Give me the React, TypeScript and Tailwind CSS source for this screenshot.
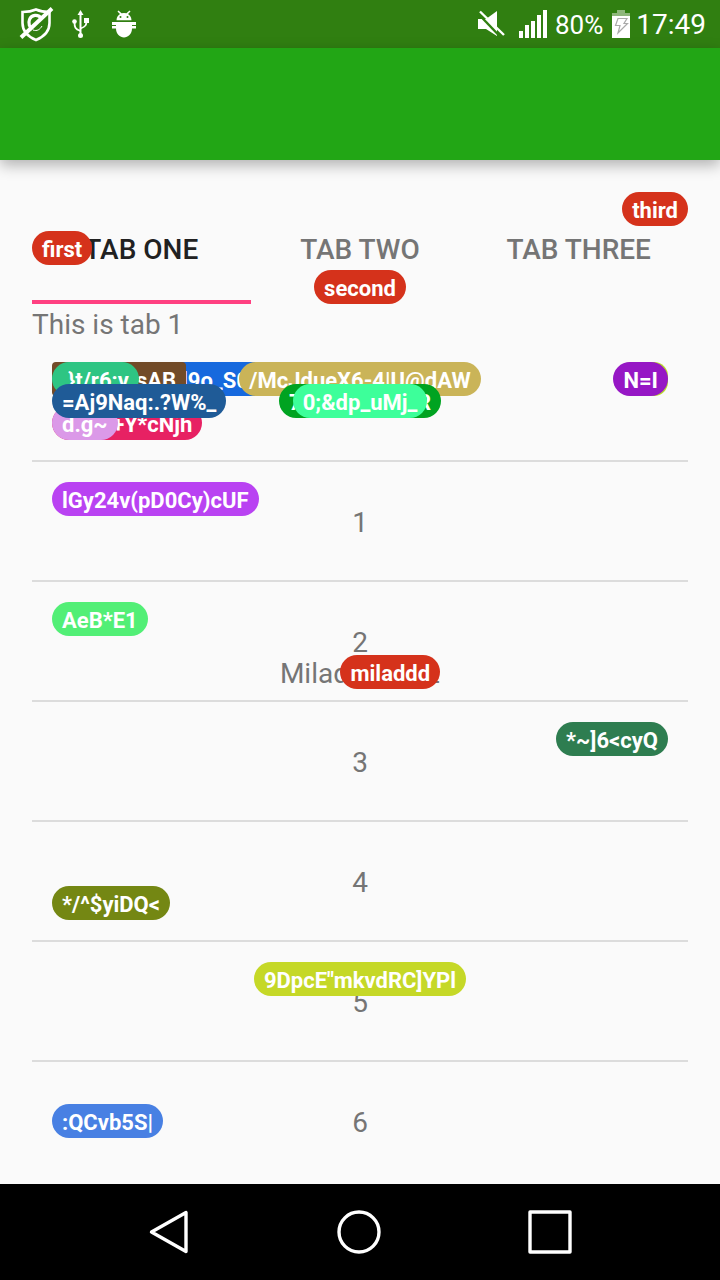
import React from "react";

type BadgeProps = { text: string; place: string; color: string };

function Badge({ text, place, color }: BadgeProps) {
  return (
    <span
      className={`absolute h-[34px] px-[10px] pt-[3px] text-[22px] leading-[32px] font-bold whitespace-pre text-white ${place} ${color}`}
    >
      {text}
    </span>
  );
}

const tabs = [
  {
    label: "TAB ONE",
    active: true,
    badge: { text: "first", place: "left-0 inset-y-0 my-auto rounded-full", color: "bg-[#d5321b]" },
  },
  {
    label: "TAB TWO",
    active: false,
    badge: { text: "second", place: "bottom-0 inset-x-0 mx-auto w-fit rounded-full", color: "bg-[#d5321b]" },
  },
  {
    label: "TAB THREE",
    active: false,
    badge: { text: "third", place: "top-0 right-0 rounded-full", color: "bg-[#d5321b]" },
  },
];

const rows: BadgeProps[][] = [
  [
    { text: "(kq7RwrT2xl9o_S0d", place: "left-5 top-5 rounded-md", color: "bg-[#1669de]" },
    { text: "Wm3xasAB", place: "left-5 top-5 rounded-sm", color: "bg-[#724b28]" },
    { text: "}t/r6:v", place: "left-5 top-5 pl-4 rounded-full", color: "bg-[#2ec583]" },
    { text: "/McJdueX6-4|U@dAW", place: "top-5 inset-x-0 mx-auto w-fit rounded-full", color: "bg-[#cab458]" },
    { text: "x=l", place: "top-5 right-5 rounded-[14px]", color: "bg-[#b9dd2b]" },
    { text: "N=I", place: "top-5 right-5 rounded-full", color: "bg-[#9617c5]" },
    { text: "eK2a+Y*cNjh", place: "left-5 bottom-5 rounded-full", color: "bg-[#e72163]" },
    { text: "d.g~", place: "left-5 bottom-5 rounded-full", color: "bg-[#db99e8]" },
    { text: "=Aj9Naq:.?W%_", place: "left-5 inset-y-0 my-auto rounded-full", color: "bg-[#1f5b97]" },
    { text: "7hV:c[w4m;xR", place: "inset-0 m-auto w-fit rounded-full", color: "bg-[#00a321]" },
    { text: "0;&dp_uMj_", place: "inset-0 m-auto w-fit rounded-full", color: "bg-[#3dff9a]" },
  ],
  [{ text: "lGy24v(pD0Cy)cUF", place: "left-5 top-5 rounded-full", color: "bg-[#b942f2]" }],
  [{ text: "AeB*E1", place: "left-5 top-5 rounded-full", color: "bg-[#52ef76]" }],
  [{ text: "*~]6<cyQ", place: "right-5 top-5 rounded-full", color: "bg-[#2e7d50]" }],
  [{ text: "*/^$yiDQ<", place: "left-5 bottom-5 rounded-full", color: "bg-[#748713]" }],
  [{ text: '9DpcE"mkvdRC]YPl', place: "top-5 inset-x-0 mx-auto w-fit rounded-full", color: "bg-[#c5d827]" }],
  [{ text: ":QCvb5S|", place: "left-5 inset-y-0 my-auto rounded-full", color: "bg-[#4880e3]" }],
];

function StatusBar() {
  return (
    <header className="flex h-12 items-center justify-between bg-[#307f11] pr-[14px] pl-[18px] text-white">
      <div className="flex items-center">
        <svg width="36" height="36" viewBox="0 0 36 36" fill="none" stroke="currentColor">
          <path d="M18 3.500C13.500 5.500 9 6 4.500 6V17c0 8 5 13.500 13.500 17C26.500 30.500 31.500 25 31.500 17V6C27 6 22.500 5.500 18 3.500Z" strokeWidth="2.600" />
          <path d="M23 12c-3-4-9.500-3.500-11.500 1.500-1.500 4 0 8 3 9.500" strokeWidth="3.200" />
          <path d="M15 24c4 1.500 7-.500 9-4" strokeWidth="1" />
          <path d="M3 31.500L34 2.500" strokeWidth="4" />
        </svg>
        <svg className="ml-[18px]" width="17" height="30" viewBox="0 0 17 30" fill="none" stroke="currentColor">
          <path d="M8.500 27V5" strokeWidth="2" />
          <path d="M8.500 22C3 20 2.500 18.500 2.500 13M8.500 19.500C14 17.500 14.500 16 14.500 11" strokeWidth="1.800" />
          <path d="M8.500 1l3 5h-6z" fill="currentColor" stroke="none" />
          <circle cx="8.500" cy="26.500" r="2.500" fill="currentColor" stroke="none" />
          <circle cx="2.500" cy="12.500" r="2.300" fill="currentColor" stroke="none" />
          <path d="M12 9h5v5h-5z" fill="currentColor" stroke="none" />
        </svg>
        <svg className="ml-[23px]" width="24" height="28" viewBox="0 0 24 28" fill="currentColor">
          <path d="M4.500 10.300C4.500 7 6.500 5 8 4L5.500 1.500 6.500.500 9.500 3.300a8 8 0 0 1 5 0L17.500.500l1 1L16 4c1.500 1 3.500 3 3.500 6.300Z" />
          <path d="M0 12h24v3h-4v1h4v2.500h-4C20 24 16 27.500 12 27.500S4 24 4 18.500H0V16h4v-1H0z" />
          <circle cx="8.500" cy="7" r="1" fill="#307f11" />
          <circle cx="15.500" cy="7" r="1" fill="#307f11" />
        </svg>
      </div>
      <div className="flex items-center">
        <svg width="28" height="28" viewBox="0 0 28 28" fill="currentColor">
          <path d="M1 9h8l11-8v25L9 19H1Z" />
          <path d="M1 3.500L24 27.500" stroke="#307f11" strokeWidth="2.400" />
          <path d="M3 1.500L27 25" stroke="currentColor" strokeWidth="2.400" />
        </svg>
        <svg className="ml-[14px]" width="28" height="28" viewBox="0 0 28 28" fill="currentColor">
          <path d="M0 21h4v7H0zM6 15h4v13H6zM12 11h4v17h-4zM18 5h4v23h-4zM24 0h4v28h-4z" />
        </svg>
        <span className="ml-2 pt-[2px] text-[26px] leading-8">80%</span>
        <svg className="ml-[9px]" width="18" height="28" viewBox="0 0 18 28">
          <path d="M5 0h8v3h5v25H0V3h5z" fill="#8fb77c" />
          <path d="M0 6h18v22H0z" fill="#fff" />
          <path d="M6 8.500h9l-3 5h3.500L6 23l2-7.500H3.500z" fill="none" stroke="#aaa" strokeWidth="1.200" />
        </svg>
        <span className="ml-[6px] pt-[2px] text-[28px] leading-8">17:49</span>
      </div>
    </header>
  );
}

export default function App() {
  return (
    <div className="flex min-h-screen flex-col bg-[#fafafa] font-[Roboto,sans-serif] text-[#757575]">
      <StatusBar />
      <div className="relative z-10 h-28 bg-[#22a615] shadow-[0_5px_14px_0px_rgba(0,0,0,0.3)]" />

      <main className="relative flex-1 px-8 pt-8">
        <div role="tablist" className="grid grid-cols-3">
          {tabs.map((tab) => (
            <div key={tab.label} className="relative">
              <button
                role="tab"
                aria-selected={tab.active}
                className={`h-28 w-full border-b-4 pt-2 text-[28px] font-medium ${
                  tab.active ? "border-[#ff4081] text-[#212121]" : "border-transparent"
                }`}
              >
                {tab.label}
              </button>
              <Badge {...tab.badge} />
            </div>
          ))}
        </div>

        <p className="pt-[3px] text-[28px] leading-[35px]">This is tab 1</p>

        <ul className="divide-y-2 divide-[#dcdcdc]">
          {rows.map((badges, i) => (
            <li key={i}>
              <div className="relative flex h-[118px] items-center justify-center pt-1 text-[28px]">
                {i}
                {badges.map((badge, n) => (
                  <Badge key={n} {...badge} />
                ))}
              </div>
            </li>
          ))}
        </ul>

        <div className="pointer-events-none absolute inset-0 flex items-center justify-center">
          <div className="relative pt-1 text-[28px] leading-[34px]">
            Milad Text12
            <Badge text="miladdd" place="right-0 inset-y-0 my-auto rounded-full" color="bg-[#d5321b]" />
          </div>
        </div>
      </main>

      <nav className="flex h-24 items-center justify-center gap-[143px] bg-black text-white">
        <button aria-label="Back">
          <svg width="48" height="48" viewBox="0 0 48 48" fill="none" stroke="currentColor" strokeWidth="3.400" strokeLinejoin="round">
            <path d="M41 4.500v39L6.500 24z" />
          </svg>
        </button>
        <button aria-label="Home">
          <svg width="48" height="48" viewBox="0 0 48 48" fill="none" stroke="currentColor" strokeWidth="3.400">
            <circle cx="23" cy="24" r="20" />
          </svg>
        </button>
        <button aria-label="Recent apps">
          <svg width="48" height="48" viewBox="0 0 48 48" fill="none" stroke="currentColor" strokeWidth="3.400" strokeLinejoin="round">
            <path d="M3 4h40v40H3z" />
          </svg>
        </button>
      </nav>
    </div>
  );
}
